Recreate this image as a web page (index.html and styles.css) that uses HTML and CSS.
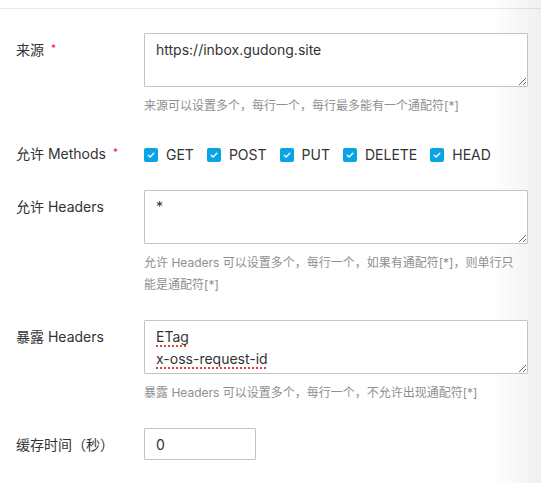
FILE: index.html
```html
<!DOCTYPE html>
<html lang="zh-CN">
<head>
<meta charset="utf-8">
<title>CORS 规则</title>
<link rel="stylesheet" href="styles.css">
</head>
<body>
<div class="topbar"></div>
<form class="form">
  <div class="row">
    <div class="label">来源<span class="req">*</span></div>
    <div class="control">
      <textarea class="field" spellcheck="false">https://inbox.gudong.site</textarea>
      <div class="help">来源可以设置多个，每行一个，每行最多能有一个通配符[*]</div>
    </div>
  </div>
  <div class="row row-methods">
    <div class="label label-mid">允许 Methods<span class="req">*</span></div>
    <div class="control checks">
      <label class="check"><span class="box"><svg viewBox="0 0 14 14" width="14" height="14"><path d="M4.2 7.2 L6.1 9 L9.8 5.2" fill="none" stroke="#fff" stroke-width="1.3" stroke-linecap="round" stroke-linejoin="round"/></svg></span>GET</label>
      <label class="check"><span class="box"><svg viewBox="0 0 14 14" width="14" height="14"><path d="M4.2 7.2 L6.1 9 L9.8 5.2" fill="none" stroke="#fff" stroke-width="1.3" stroke-linecap="round" stroke-linejoin="round"/></svg></span>POST</label>
      <label class="check"><span class="box"><svg viewBox="0 0 14 14" width="14" height="14"><path d="M4.2 7.2 L6.1 9 L9.8 5.2" fill="none" stroke="#fff" stroke-width="1.3" stroke-linecap="round" stroke-linejoin="round"/></svg></span>PUT</label>
      <label class="check"><span class="box"><svg viewBox="0 0 14 14" width="14" height="14"><path d="M4.2 7.2 L6.1 9 L9.8 5.2" fill="none" stroke="#fff" stroke-width="1.3" stroke-linecap="round" stroke-linejoin="round"/></svg></span>DELETE</label>
      <label class="check"><span class="box"><svg viewBox="0 0 14 14" width="14" height="14"><path d="M4.2 7.2 L6.1 9 L9.8 5.2" fill="none" stroke="#fff" stroke-width="1.3" stroke-linecap="round" stroke-linejoin="round"/></svg></span>HEAD</label>
    </div>
  </div>
  <div class="row">
    <div class="label">允许 Headers</div>
    <div class="control">
      <textarea class="field" spellcheck="false">*</textarea>
      <div class="help">允许 Headers 可以设置多个，每行一个，如果有通配符[*]，则单行只能是通配符[*]</div>
    </div>
  </div>
  <div class="row">
    <div class="label">暴露 Headers</div>
    <div class="control">
      <div class="field field-div" contenteditable="true"><span class="typo">ETag</span><br><span class="typo">x-oss-request-id</span></div>
      <div class="help">暴露 Headers 可以设置多个，每行一个，不允许出现通配符[*]</div>
    </div>
  </div>
  <div class="row row-last">
    <div class="label">缓存时间（秒）</div>
    <div class="control">
      <input class="input" type="text" value="0">
    </div>
  </div>
</form>
</body>
</html>
```

FILE: styles.css
```css
html {
  background: linear-gradient(to right, #ffffff 0, #ffffff 492px, #f0f0f0 541px);
  min-height: 100%;
}
body {
  margin: 0;
  font-family: "Inter", "Noto Sans CJK SC", sans-serif;
  font-size: 14px;
  color: #333;
}
.topbar {
  height: 8px;
  border-bottom: 1px solid rgba(0, 0, 0, 0.09);
}
.form {
  padding: 24px 13px 0 16px;
}
.row {
  display: grid;
  grid-template-columns: 128px 1fr;
  margin-bottom: 24px;
}
.row-methods {
  margin-bottom: 22px;
  align-items: center;
}
.label {
  padding-top: 6px;
  line-height: 22px;
  white-space: nowrap;
  color: #333;
}
.label-mid {
  padding-top: 0;
  line-height: 26px;
}
.req {
  color: #e5252a;
  font-size: 10px;
  margin-left: 7px;
  position: relative;
  top: -3px;
}
.control {
  min-width: 0;
}
.field {
  display: block;
  box-sizing: border-box;
  width: 100%;
  height: 54px;
  margin: 0;
  padding: 5px 11px;
  border: 1px solid #c4c4c4;
  border-radius: 1px;
  font: inherit;
  font-size: 14px;
  line-height: 22px;
  color: #333;
  background: #fff;
  resize: vertical;
  outline: none;
}
.field-div {
  overflow: auto;
}
.typo {
  text-decoration: underline dotted #e0433b;
  text-decoration-thickness: 2px;
  text-underline-offset: 3px;
}
.help {
  margin-top: 8px;
  font-size: 12px;
  line-height: 22px;
  color: #8f8f8f;
  padding-right: 10px;
}
.checks {
  display: flex;
  align-items: center;
  gap: 13px;
  height: 26px;
}
.check {
  display: flex;
  align-items: center;
  gap: 8px;
  line-height: 26px;
  color: #333;
}
.box {
  display: block;
  width: 14px;
  height: 14px;
  border-radius: 2px;
  background: #0aa3e6;
}
.box svg {
  display: block;
}
.input {
  box-sizing: border-box;
  width: 112px;
  height: 32px;
  margin: 0;
  padding: 0 11px;
  border: 1px solid #c4c4c4;
  border-radius: 1px;
  font: inherit;
  font-size: 14px;
  color: #333;
  background: #fff;
  outline: none;
}
.row-last {
  margin-bottom: 0;
}
.row-last .label {
  padding-top: 6px;
}
```
